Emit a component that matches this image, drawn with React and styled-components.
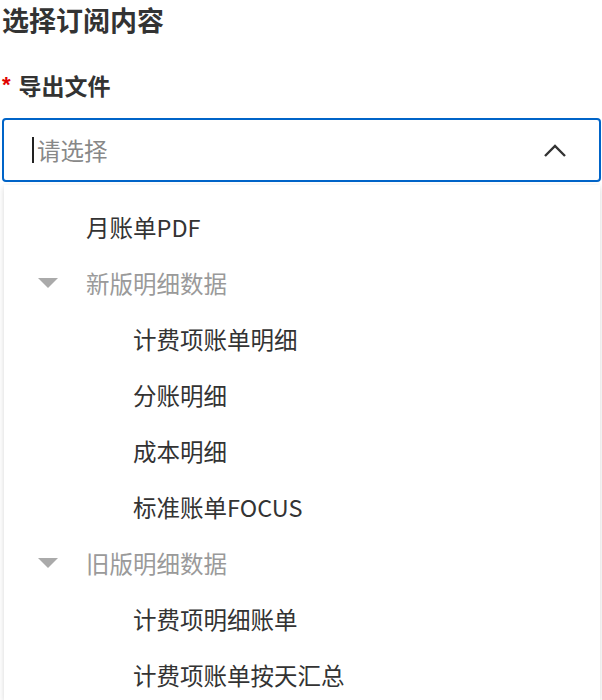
import React from "react";
import styled, { createGlobalStyle } from "styled-components";

const GlobalStyle = createGlobalStyle`
  html, body {
    margin: 0;
    padding: 0;
    background: #ffffff;
    overflow: hidden;
  }
  body {
    font-family: "Noto Sans CJK SC", "Noto Sans", sans-serif;
    color: #333333;
  }
`;

const options = [
  { key: "pdf", label: "月账单PDF", level: 0 },
  { key: "new", label: "新版明细数据", level: 0, group: true },
  { key: "new-item", label: "计费项账单明细", level: 1 },
  { key: "new-split", label: "分账明细", level: 1 },
  { key: "new-cost", label: "成本明细", level: 1 },
  { key: "new-focus", label: "标准账单FOCUS", level: 1 },
  { key: "old", label: "旧版明细数据", level: 0, group: true },
  { key: "old-item", label: "计费项明细账单", level: 1 },
  { key: "old-day", label: "计费项账单按天汇总", level: 1 }
];

export default function App() {
  return (
    <Root>
      <GlobalStyle />
      <Title>选择订阅内容</Title>
      <Label>
        <Required>*</Required>导出文件
      </Label>
      <Select>
        <Caret />
        <Placeholder>请选择</Placeholder>
        <Arrow width="24" height="16" viewBox="0 0 24 16">
          <path d="M2 14 L12 4 L22 14" fill="none" stroke="#333" strokeWidth="2.4" />
        </Arrow>
      </Select>
      <Dropdown>
        {options.map(({ key, label, level, group }) => (
          <Option key={key} level={level}>
            <Switcher>{group && <Triangle />}</Switcher>
            <OptionText group={group}>{label}</OptionText>
          </Option>
        ))}
      </Dropdown>
    </Root>
  );
}

const Root = styled.div`
  width: 602px;
  height: 700px;
  padding: 0 1px 0 2px;
  box-sizing: border-box;
  display: flex;
  flex-direction: column;
`;

const Title = styled.h1`
  margin: 0;
  font-size: 27px;
  line-height: 40px;
  font-weight: 700;
  color: #333333;
`;

const Label = styled.div`
  margin-top: 25px;
  font-size: 23px;
  line-height: 40px;
  font-weight: 700;
  color: #333333;
  display: flex;
  align-items: center;
`;

const Required = styled.span`
  color: #e00000;
  font-size: 22px;
  margin-right: 8px;
  font-family: "Liberation Sans", sans-serif;
`;

const Select = styled.div`
  margin-top: 13px;
  height: 64px;
  box-sizing: border-box;
  border: 2px solid #0064c8;
  border-radius: 4px;
  display: flex;
  align-items: center;
  padding: 0 32px 0 28px;
`;

const Caret = styled.span`
  width: 2px;
  height: 26px;
  background: #222222;
  margin-right: 3px;
`;

const Placeholder = styled.span`
  flex: 1;
  font-size: 23.5px;
  color: #888888;
`;

const Arrow = styled.svg`
  display: block;
`;

const Dropdown = styled.div`
  margin: 3px 1px 0 2px;
  flex: 1;
  background: #ffffff;
  box-shadow: 0 2px 6px rgba(0, 0, 0, 0.16);
  padding-top: 14px;
  overflow: hidden;
`;

const Option = styled.div`
  height: 56px;
  display: flex;
  align-items: center;
  padding-left: ${(p) => 34 + p.level * 47}px;
`;

const Switcher = styled.span`
  width: 48px;
  flex: none;
  display: flex;
  align-items: center;
`;

const Triangle = styled.span`
  width: 0;
  height: 0;
  border-left: 10px solid transparent;
  border-right: 10px solid transparent;
  border-top: 10px solid #aaaaaa;
`;

const OptionText = styled.span`
  font-size: 23.5px;
  color: ${(p) => (p.group ? "#9a9a9a" : "#333333")};
  white-space: nowrap;
`;
